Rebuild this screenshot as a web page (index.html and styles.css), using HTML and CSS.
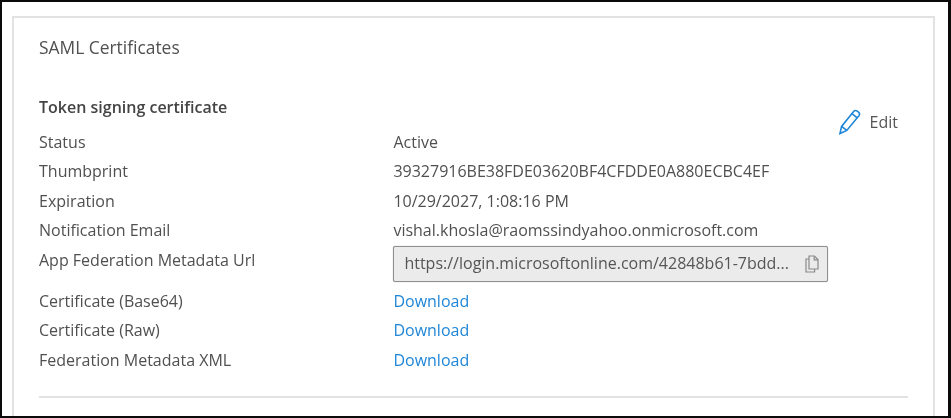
FILE: index.html
```html
<!DOCTYPE html>
<html lang="en">
<head>
<meta charset="utf-8">
<title>SAML Certificates</title>
<link rel="stylesheet" href="styles.css">
</head>
<body>
<div class="frame">
  <section class="card">
    <h2 class="title">SAML Certificates</h2>
    <div class="head">
      <h3 class="subtitle">Token signing certificate</h3>
      <a class="edit">
        <svg class="edit-icon" width="24" height="26" viewBox="0 0 24 26" fill="none" stroke="#1f86d8" stroke-width="1.6"><path d="M2 24.5 3.6 17.4 15.6 2.6a2.6 2.6 0 0 1 3.6-.4l1.3 1a2.6 2.6 0 0 1 .4 3.6L8.8 21.4 2 24.5Z"/><path d="M3.6 17.4 8.8 21.4M14 4.6 19.2 8.8"/></svg>
        <span>Edit</span>
      </a>
    </div>
    <dl class="rows">
      <dt class="label">Status</dt><dd class="value">Active</dd>
      <dt class="label">Thumbprint</dt><dd class="value">39327916BE38FDE03620BF4CFDDE0A880ECBC4EF</dd>
      <dt class="label">Expiration</dt><dd class="value">10/29/2027, 1:08:16 PM</dd>
      <dt class="label">Notification Email</dt><dd class="value">vishal.khosla@raomssindyahoo.onmicrosoft.com</dd>
      <dt class="label">App Federation Metadata Url</dt>
      <dd class="value">
        <div class="url-box">
          <span class="url-text">https://login.microsoftonline.com/42848b61-7bdd...</span>
          <svg width="14" height="18" viewBox="0 0 14 18" fill="none" stroke="#8a8a8a" stroke-width="1.2"><path d="M4 4H1v13h8.6v-3"/><path d="M4 1h5.4l3.6 3.6V14H4V1Z"/><path d="M9.2 1.2v3.6h3.6"/></svg>
        </div>
      </dd>
      <dt class="label">Certificate (Base64)</dt><dd class="value"><a class="link">Download</a></dd>
      <dt class="label">Certificate (Raw)</dt><dd class="value"><a class="link">Download</a></dd>
      <dt class="label">Federation Metadata XML</dt><dd class="value"><a class="link">Download</a></dd>
    </dl>
    <hr class="rule">
  </section>
</div>
</body>
</html>
```
FILE: styles.css
```css
* { box-sizing: border-box; }
html, body { margin: 0; padding: 0; background: #fff; }
body { width: 951px; height: 418px; overflow: hidden; font-family: "Open Sans", "Noto Sans", sans-serif; color: #4a4a4a; }
.frame { width: 951px; height: 418px; border: solid #0a0a0a; border-width: 2px 3px 2px 2px; padding: 14px 13px 0 10px; overflow: hidden; background: #fff; filter: blur(0.4px); }
.card { height: 400px; border: 2px solid #e2e2e2; border-bottom: 0; padding: 17px 25px 0 25px; background: #fff; }
.title { margin: 0; font-size: 17.4px; font-weight: 400; line-height: 24px; color: #505050; }
.head { margin-top: 36px; height: 24px; position: relative; }
.subtitle { margin: 0; font-size: 16px; font-weight: 600; line-height: 24px; color: #444; }
.edit { position: absolute; right: 10px; top: 14px; display: flex; align-items: center; gap: 8px; font-size: 16px; color: #555; }
.rows { margin: 8.9px 0 0; display: grid; grid-template-columns: 354.4px 1fr; grid-template-rows: repeat(4, 29.5px) 41px repeat(3, 29.5px); font-size: 16px; line-height: 29.5px; color: #505050; }
.label { margin: 0; }
.value { margin: 0; }
.url-box { width: 434.6px; height: 36px; margin-top: 0.1px; display: flex; align-items: center; justify-content: space-between; padding: 0 8px 0 10px; background: #ebebeb; border: 1px solid #8f8f8f; border-radius: 2px; box-shadow: 0 0 1px #999; }
.url-text { white-space: nowrap; color: #555; }
.link { color: #1f86d8; }
.rule { margin: 20.6px 0 0; border: 0; height: 2px; background: #e2e2e2; }
```
